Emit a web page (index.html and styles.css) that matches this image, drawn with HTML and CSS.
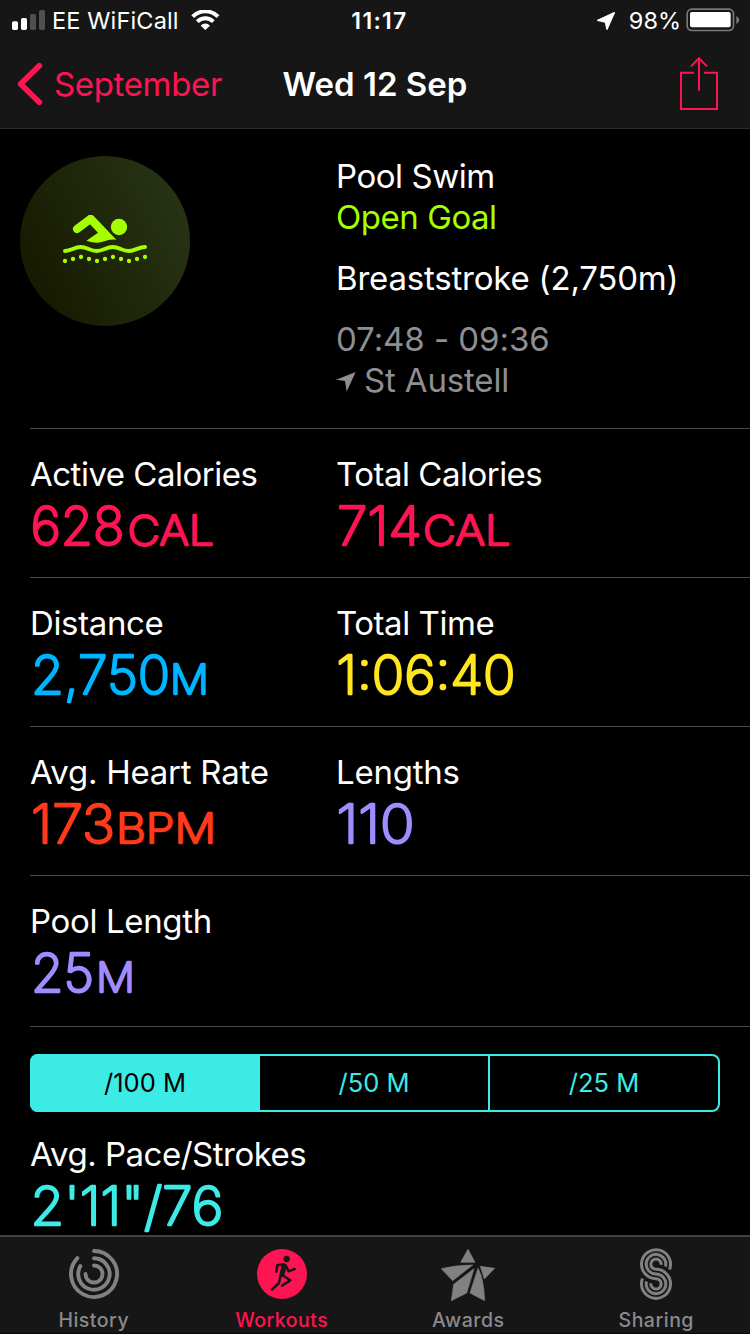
FILE: index.html
```html
<!DOCTYPE html>
<html lang="en">
<head>
<meta charset="utf-8">
<title>Wed 12 Sep</title>
<link rel="stylesheet" href="styles.css">
</head>
<body>
<div class="screen">
  <header class="header">
    <div class="status">
      <div class="status-left">
        <svg class="signal" width="34" height="20" viewBox="36 30 102 60"><g fill="#fff"><rect x="36" y="64" width="18" height="26" rx="5"/><rect x="63" y="54" width="18" height="36" rx="5"/></g><g fill="#505050"><rect x="90" y="42" width="18" height="48" rx="5"/><rect x="117" y="30" width="18" height="60" rx="5"/></g></svg>
        <span class="carrier">EE WiFiCall</span>
        <svg class="wifi" width="30" height="21" viewBox="572 30 90 63" fill="none" stroke="#fff" stroke-width="12"><path d="M577 50A53 53 0 0 1 653 50"/><path d="M591 65A34 34 0 0 1 639 65"/><path d="M615 90L601 77A19 19 0 0 1 629 77Z" fill="#fff" stroke="none"/></svg>
      </div>
      <div class="time">11:17</div>
      <div class="status-right">
        <svg class="locating" width="18" height="18" viewBox="52 36 54 54" fill="#fff" stroke="#fff" stroke-width="4" stroke-linejoin="round"><path d="M104 38L54 61L77 66L82 88Z"/></svg>
        <span class="percent">98%</span>
        <svg class="battery" width="54" height="24" viewBox="317 26 162 72"><rect x="320.500" y="29.500" width="139" height="64" rx="14" fill="none" stroke="#777" stroke-width="5"/><rect x="329" y="38" width="122" height="46" rx="6" fill="#fff"/><path d="M468 50Q477 54 477 62Q477 70 468 74Z" fill="#777"/></svg>
      </div>
    </div>
    <nav class="nav">
      <a class="back"><svg width="26" height="44" viewBox="51 186 78 132"><path d="M118 197L62 252L118 307" fill="none" stroke="#ff1453" stroke-width="17" stroke-linecap="round" stroke-linejoin="round"/></svg><span class="back-text">September</span></a>
      <h1 class="title">Wed 12 Sep</h1>
      <svg class="share" width="40" height="54" viewBox="297 171 120 162" fill="none" stroke="#ff1453" stroke-width="6"><path d="M342 218H303V327H411V218H372M357 272V176M333 199L357 175L381 199"/></svg>
    </nav>
  </header>

  <main class="content">
    <section class="summary">
      <div class="badge">
        <svg width="86" height="52" viewBox="156 210 258 156" fill="#a6ff00"><path d="M201 252L241 222" stroke="#a6ff00" stroke-width="24" stroke-linecap="round"/><path d="M235 212Q243 207 251 213L319 284Q300 281 283 289Q260 298 229 287L264 263L240 238Z"/><circle cx="327" cy="246" r="24.500"/><path d="M165 318C184 318 192 306 212 306S240 318 260 318S288 306 308 306S336 318 356 318S386 306 405 306" fill="none" stroke="#a6ff00" stroke-width="12" stroke-linecap="round"/><circle cx="165" cy="348" r="6.500"/><circle cx="189" cy="342" r="6.500"/><circle cx="213" cy="336" r="6.500"/><circle cx="237" cy="342" r="6.500"/><circle cx="261" cy="348" r="6.500"/><circle cx="285" cy="342" r="6.500"/><circle cx="309" cy="336" r="6.500"/><circle cx="333" cy="342" r="6.500"/><circle cx="357" cy="348" r="6.500"/><circle cx="381" cy="342" r="6.500"/><circle cx="405" cy="336" r="6.500"/></svg>
      </div>
      <div class="details">
        <p class="line">Pool Swim</p>
        <p class="line goal">Open Goal</p>
        <p class="line stroke-type">Breaststroke (2,750m)</p>
        <p class="line muted hours">07:48 - 09:36</p>
        <p class="line muted place"><svg width="20" height="20" viewBox="49 664 60 60" fill="#8e8e93"><path d="M108 667L49 690L76 694L81 726Z"/></svg><span>St Austell</span></p>
      </div>
    </section>

    <section class="row">
      <div class="metric"><p class="label l-active">Active Calories</p><svg class="value pink" width="300" height="82"><text x=".5" y="50" textLength="94" lengthAdjust="spacingAndGlyphs">628</text><text class="unit" x="97.500" y="50" textLength="86.500" lengthAdjust="spacingAndGlyphs">CAL</text></svg></div>
      <div class="metric"><p class="label l-total">Total Calories</p><svg class="value pink" width="300" height="82"><text x="1" y="50" textLength="85" lengthAdjust="spacingAndGlyphs">714</text><text class="unit" x="87" y="50" textLength="87.500" lengthAdjust="spacingAndGlyphs">CAL</text></svg></div>
    </section>
    <section class="row">
      <div class="metric"><p class="label l-distance">Distance</p><svg class="value blue" width="300" height="82"><text x="1" y="50" textLength="139" lengthAdjust="spacingAndGlyphs">2,750</text><text class="unit" x="140" y="50" textLength="39" lengthAdjust="spacingAndGlyphs">M</text></svg></div>
      <div class="metric"><p class="label l-time">Total Time</p><svg class="value yellow" width="300" height="82"><text x=".5" y="50" textLength="179" lengthAdjust="spacingAndGlyphs">1:06:40</text></svg></div>
    </section>
    <section class="row">
      <div class="metric"><p class="label l-heart">Avg. Heart Rate</p><svg class="value red" width="300" height="82"><text x="1" y="50" textLength="84" lengthAdjust="spacingAndGlyphs">173</text><text class="unit" x="86" y="50" textLength="100" lengthAdjust="spacingAndGlyphs">BPM</text></svg></div>
      <div class="metric"><p class="label l-lengths">Lengths</p><svg class="value purple" width="300" height="82"><text x=".5" y="50" textLength="78" lengthAdjust="spacingAndGlyphs">110</text></svg></div>
    </section>
    <section class="row last">
      <div class="metric"><p class="label l-pool">Pool Length</p><svg class="value purple" width="300" height="82"><text x="1" y="50" textLength="63" lengthAdjust="spacingAndGlyphs">25</text><text class="unit" x="66" y="50" textLength="39" lengthAdjust="spacingAndGlyphs">M</text></svg></div>
    </section>

    <section class="pace">
      <div class="segments">
        <span class="segment active">/100 M</span><span class="segment">/50 M</span><span class="segment">/25 M</span>
      </div>
      <p class="label l-pace">Avg. Pace/Strokes</p>
      <svg class="value teal" width="300" height="40"><text x=".5" y="50" textLength="193" lengthAdjust="spacingAndGlyphs">2'11"/76</text></svg>
    </section>
  </main>

  <footer class="tabs">
    <div class="tab"><svg width="54" height="54" viewBox="-27 -27 54 54" fill="none" stroke="#818181" stroke-width="3.900" stroke-linecap="round"><path d="M0 -23A23 23 0 1 1 -16.600 -15.900"/><path d="M0 -15.700A15.700 15.700 0 1 1 -13.600 -7.900"/><path d="M0 -8.500A8.500 8.500 0 1 1 -8.500 0"/></svg><span>History</span></div>
    <div class="tab current"><svg width="54" height="54" viewBox="765 51 162 162"><circle cx="846" cy="132" r="75" fill="#ff1453"/><circle cx="860" cy="87" r="9.500" fill="#161616"/><g fill="none" stroke="#161616" stroke-width="7.500" stroke-linecap="round" stroke-linejoin="round"><path d="M850 103L832 106L829 125M857 106L866 124L884 117M850 137L871 151L846 167M842 135L837 159L816 179"/><path d="M852 108L846 134" stroke-width="15"/></g></svg><span>Workouts</span></div>
    <div class="tab awards"><svg width="54" height="54" viewBox="198 51 162 162" fill="#818181" stroke="#818181" stroke-width="2" stroke-linejoin="round"><path d="M279 58L300 97H257ZM199 116Q245 105 293 105L233 152ZM297 116L275 189L229 212L236 163ZM316 109L359 115L328 147ZM309 115Q326 143 329 212L285 189Z"/></svg><span>Awards</span></div>
    <div class="tab"><svg width="54" height="54" viewBox="-27 -17.200 54 54" fill="none" stroke="#818181" stroke-width="3"><path d="M13.480 5.350A14.500 14.500 0 1 0 0 14.500A5.170 5.170 0 1 1 -5.120 18.990"/><path d="M9.520 2.460A9.830 9.830 0 1 0 0 9.830A9.830 9.830 0 1 1 -9.520 17.210"/><path d="M5.120 .680A5.170 5.170 0 1 0 0 5.170A14.500 14.500 0 1 1 -13.480 14.320"/></svg><span>Sharing</span></div>
  </footer>
</div>
</body>
</html>
```
FILE: styles.css
```css
* { box-sizing: border-box; }
body { margin: 0; background: #000; color: #fff; font-family: Inter, "Liberation Sans", sans-serif; }
p, h1 { margin: 0; }
svg { display: block; flex: none; }
.screen { width: 750px; height: 1334px; display: flex; flex-direction: column; overflow: hidden; }

.header { height: 129px; flex: none; background: #161616; border-bottom: 1px solid #2b2b2d; }
.status { height: 40px; display: grid; grid-template-columns: 1fr auto 1fr; align-items: center; font-size: 23.5px; line-height: 38px; }
.status-left { display: flex; align-items: center; padding-left: 12px; }
.carrier { margin-left: 6px; letter-spacing: 0.15px; padding-top: 2px; }
.wifi { margin-left: 12px; }
.time { font-weight: 600; font-size: 23px; letter-spacing: 1.3px; padding-left: 9px; padding-top: 2px; }
.status-right { display: flex; align-items: center; justify-content: flex-end; padding-right: 10px; }
.locating { margin-top: 2px; }
.percent { margin-left: 14px; margin-right: 5px; padding-top: 2px; }
.nav { height: 88px; display: grid; grid-template-columns: 1fr auto 1fr; align-items: center; font-size: 33px; }
.back { display: flex; align-items: center; color: #ff1453; padding-left: 17px; gap: 11px; }
.back-text { letter-spacing: -0.35px; }
.title { font-size: 33px; font-weight: 600; letter-spacing: 0; }
.share { justify-self: end; margin-right: 31px; }

.content { flex: 1; min-height: 0; overflow: hidden; }
.summary { height: 299px; padding: 27px 0 0 20px; display: flex; }
.badge { width: 170px; height: 170px; border-radius: 50%; display: flex; align-items: center; justify-content: center; background: linear-gradient(65deg, #161a00 12%, #273214 85%); }
.details { margin-left: 146px; }
.line, .label { font-size: 33px; line-height: 41px; white-space: nowrap; letter-spacing: -0.45px; }
.goal { color: #a6ff00; }
.stroke-type, .hours { margin-top: 20px; }
.stroke-type { letter-spacing: -0.2px; }
.muted { color: #8e8e93; }
.hours { letter-spacing: -0.05px; }
.place { display: flex; align-items: center; gap: 8px; letter-spacing: -0.15px; }
.l-active, .l-pace, .l-total { letter-spacing: -0.5px; }
.l-distance, .l-pool { letter-spacing: -0.35px; }
.l-heart, .l-lengths { letter-spacing: -0.25px; }

.row { height: 149px; margin-left: 30px; padding-top: 25px; border-top: 1px solid #48484a; display: grid; grid-template-columns: 306px 1fr; }
.last { height: 151px; }
.value { font-size: 52.8px; font-weight: 200; overflow: visible; stroke-width: 2.4px; stroke-linejoin: round; }
.unit { font-size: 40.5px; stroke-width: 2.3px; }
.pink { fill: #ff1453; stroke: #ff1453; }
.blue { fill: #00b5ff; stroke: #00b5ff; }
.yellow { fill: #ffe620; stroke: #ffe620; }
.red { fill: #ff3a1c; stroke: #ff3a1c; }
.purple { fill: #a08cff; stroke: #a08cff; }
.teal { fill: #3ceae6; stroke: #3ceae6; }

.pace { margin-left: 30px; border-top: 1px solid #48484a; padding-top: 27px; }
.segments { width: 690px; height: 58px; border: 2px solid #3ceae6; border-radius: 8px; display: grid; grid-template-columns: 228px 228px 1fr; margin-bottom: 22px; }
.segment { color: #3ceae6; font-size: 25.5px; line-height: 54px; text-align: center; }
.segment.active { background: #3ceae6; color: #000; margin: -2px 0 -2px -2px; line-height: 58px; border-radius: 8px 0 0 8px; }
.segment + .segment + .segment { border-left: 2px solid #3ceae6; }

.tabs { height: 99px; flex: none; background: #161616; border-top: 2px solid #404042; border-bottom: 1px solid #080808; display: grid; grid-template-columns: repeat(4, 1fr); }
.tab { display: flex; flex-direction: column; align-items: center; padding-top: 10px; color: #8a8a8c; font-size: 19.5px; font-weight: 500; letter-spacing: 0.5px; line-height: 24px; }
.tab span { margin-top: 7px; }
.current { color: #ff1453; padding-left: 1px; }
.awards { padding-right: 1px; }
```
